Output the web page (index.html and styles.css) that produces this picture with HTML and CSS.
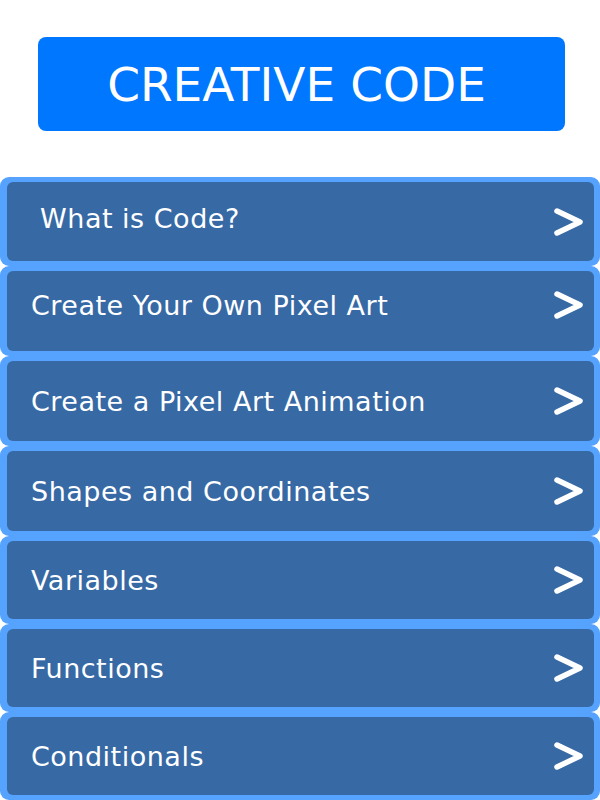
FILE: index.html
```html
<!DOCTYPE html>
<html>
<head>
<meta charset="utf-8">
<link rel="stylesheet" href="styles.css">
</head>
<body>
<header class="title">CREATIVE CODE</header>
<nav class="menu">
  <div class="item"><div class="panel"><span class="label label--up">&nbsp;What is Code?</span><svg class="chev" viewBox="0 0 32 32"><path d="M5 5 L28 16 L5 27"/></svg></div></div>
  <div class="item item--tall"><div class="panel panel--up"><span class="label">Create Your Own Pixel Art</span><svg class="chev" viewBox="0 0 32 32"><path d="M5 5 L28 16 L5 27"/></svg></div></div>
  <div class="item item--tall"><div class="panel"><span class="label">Create a Pixel Art Animation</span><svg class="chev" viewBox="0 0 32 32"><path d="M5 5 L28 16 L5 27"/></svg></div></div>
  <div class="item item--tall"><div class="panel"><span class="label">Shapes and Coordinates</span><svg class="chev" viewBox="0 0 32 32"><path d="M5 5 L28 16 L5 27"/></svg></div></div>
  <div class="item item--short"><div class="panel"><span class="label">Variables</span><svg class="chev" viewBox="0 0 32 32"><path d="M5 5 L28 16 L5 27"/></svg></div></div>
  <div class="item item--short"><div class="panel"><span class="label">Functions</span><svg class="chev" viewBox="0 0 32 32"><path d="M5 5 L28 16 L5 27"/></svg></div></div>
  <div class="item item--short"><div class="panel"><span class="label">Conditionals</span><svg class="chev" viewBox="0 0 32 32"><path d="M5 5 L28 16 L5 27"/></svg></div></div>
</nav>
</body>
</html>
```
FILE: styles.css
```css
html, body {
  margin: 0;
  padding: 0;
  background: #ffffff;
}
body {
  font-family: "DejaVu Sans", "Verdana", sans-serif;
  width: 600px;
  height: 800px;
  overflow: hidden;
}
.title {
  margin: 37px 35px 0 38px;
  height: 94px;
  background: #0077ff;
  border-radius: 8px;
  color: #ffffff;
  font-size: 47px;
  display: flex;
  align-items: center;
  justify-content: center;
  padding-top: 1px;
  padding-right: 10px;
  box-sizing: border-box;
}
.menu {
  margin-top: 46px;
  display: flex;
  flex-direction: column;
}
.item {
  height: 89px;
  box-sizing: border-box;
  padding: 5px 6px 5px 7px;
  background: #55a3ff;
  border-radius: 9px;
}
.item--tall { height: 90px; }
.item--short { height: 88px; }
.panel {
  height: 100%;
  box-sizing: border-box;
  background: #3769a5;
  border-radius: 6px;
  display: flex;
  align-items: center;
  justify-content: space-between;
  padding-left: 24px;
  padding-right: 10px;
  color: #ffffff;
}
.panel--up { padding-bottom: 12px; }
.label {
  font-size: 27px;
  letter-spacing: 0.5px;
  white-space: pre;
}
.label--up { margin-bottom: 6px; }
.chev {
  width: 32px;
  height: 32px;
  flex: none;
}
.chev path {
  fill: none;
  stroke: #ffffff;
  stroke-width: 5.5;
  stroke-linecap: round;
  stroke-linejoin: round;
}
```
